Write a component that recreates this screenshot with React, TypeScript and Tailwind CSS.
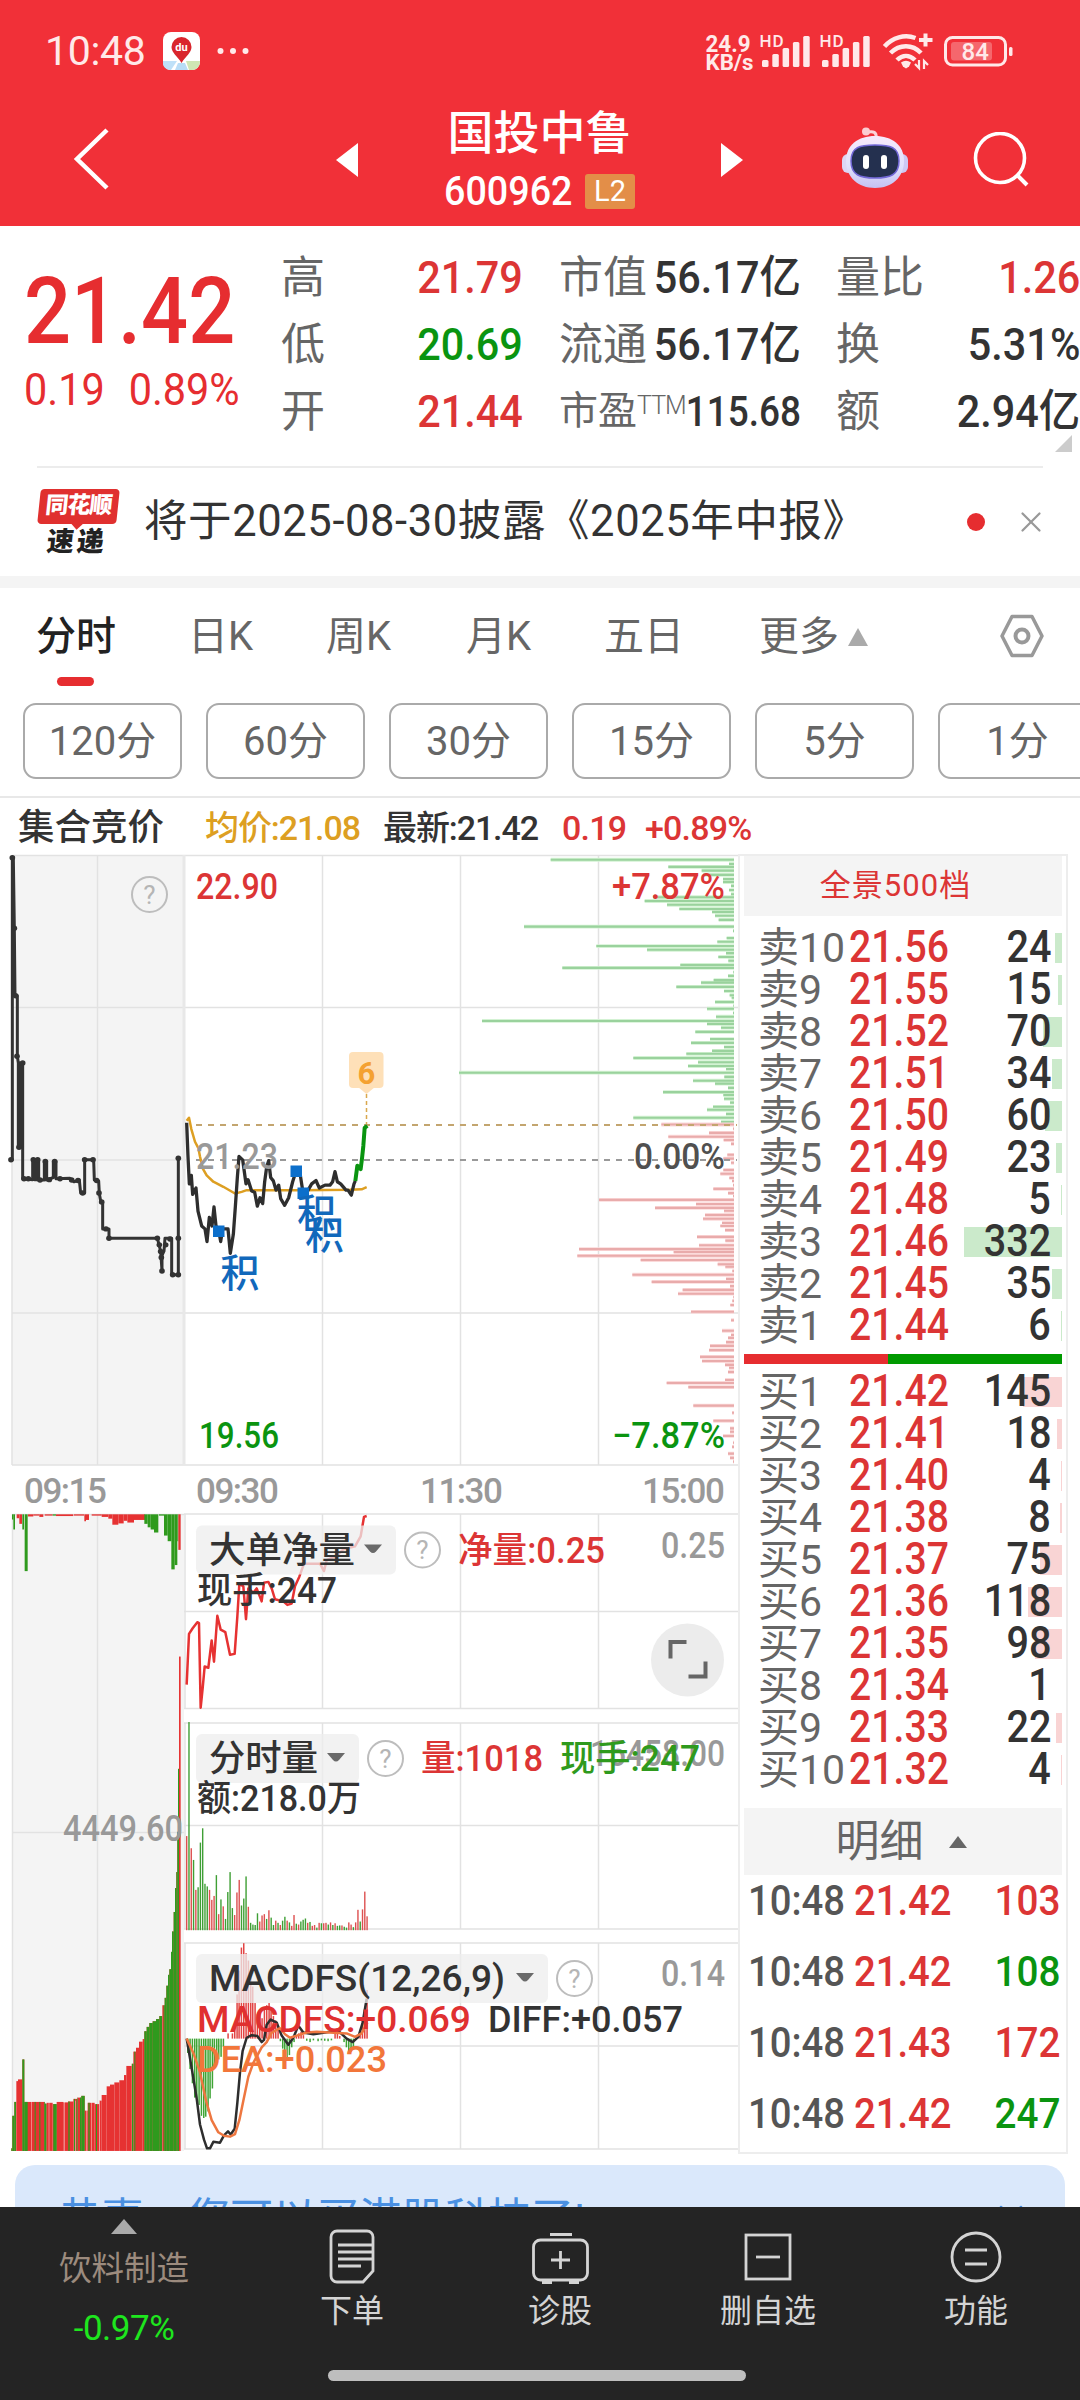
import { X } from 'lucide-react'
import clsx from 'clsx'

const RED = '#e63232'
const GREEN = '#0a9410'
const GRID = '#e2e2e2'

const periods = ['120分', '60分', '30分', '15分', '5分', '1分']

const sells = [
  ['10', '21.56', 24, 7],
  ['9', '21.55', 15, 4],
  ['8', '21.52', 70, 19],
  ['7', '21.51', 34, 10],
  ['6', '21.50', 60, 17],
  ['5', '21.49', 23, 6],
  ['4', '21.48', 5, 1],
  ['3', '21.46', 332, 98],
  ['2', '21.45', 35, 10],
  ['1', '21.44', 6, 1],
] as const

const buys = [
  ['1', '21.42', 145, 39],
  ['2', '21.41', 18, 5],
  ['3', '21.40', 4, 1],
  ['4', '21.38', 8, 2],
  ['5', '21.37', 75, 22],
  ['6', '21.36', 118, 34],
  ['7', '21.35', 98, 27],
  ['8', '21.34', 1, 0],
  ['9', '21.33', 22, 6],
  ['10', '21.32', 4, 1],
] as const

const trades = [
  ['21.42', 103, true],
  ['21.42', 108, false],
  ['21.43', 172, true],
  ['21.42', 247, false],
] as const

const AUCTION_LINE =
  '33,748 37,748 37,30 40,30 43,198 45,358 52,358 52,502 55,518 55,718 59,718 59,518 62,518 62,718 66,718 66,518 68,518 68,793 98,795 98,748 104,748 104,795 110,795 110,748 116,748 116,796 133,796 133,752 140,752 140,796 160,790 160,752 168,752 168,793 210,792 222,800 238,796 242,827 254,827 254,748 281,748 283,796 296,798 298,828 302,846 308,848 308,912 327,912 327,934 472,934 482,965 486,1012 486,975 492,965 495,934 515,934 515,1021 535,1021 535,744'
const AUCTION_DOTS = [
  [37, 30], [43, 198], [47, 358], [51, 502], [68, 518], [57, 718], [33, 748], [100, 748], [113, 748], [136, 752], [164, 752],
  [72, 793], [85, 793], [120, 796], [148, 795], [180, 793], [215, 796], [234, 797], [248, 827], [254, 748], [279, 748],
  [290, 797], [297, 827], [305, 848], [318, 912], [327, 934], [472, 934], [478, 950], [482, 966], [484, 980], [486, 1012],
  [497, 950], [510, 936], [518, 1021], [535, 1021], [535, 934], [535, 744],
]
const PRICE_LINE =
  '560,660 564,740 568,805 574,785 578,830 588,815 594,870 605,905 615,912 621,942 628,885 636,905 642,860 648,905 656,915 662,942 668,912 684,912 691,970 700,925 706,860 712,790 717,740 728,748 738,805 744,795 755,822 764,825 772,858 780,838 788,852 794,800 800,765 806,750 812,790 820,798 828,820 836,808 842,840 854,856 866,838 878,800 888,775 900,780 908,820 920,826 935,805 948,797 958,815 975,808 990,808 998,800 1005,776 1012,800 1022,805 1038,820 1044,820 1054,832 1062,805 1066,798'
const AVG_LINE =
  '560,655 567,648 574,675 585,705 595,720 600,740 608,768 620,785 640,800 670,812 705,828 725,824 740,820 900,820 1050,819 1085,818 1100,813'

// [y, left edge] of every resting order level
const ASK_DEPTH = [
  [35, 542], [45, 1077], [52, 895], [61, 995], [71, 1000], [81, 1059], [88, 1059], [97, 1083], [107, 1077], [117, 1083],
  [124, 850], [133, 824], [142, 891], [152, 928], [159, 1026], [168, 1035], [178, 1046], [194, 462], [204, 1089], [221, 1070],
  [230, 1042], [240, 679], [249, 831], [257, 1068], [266, 1045], [275, 1075], [285, 931], [292, 577], [302, 1090], [311, 1074],
  [321, 1031], [327, 993], [337, 919], [347, 1062], [357, 1079], [363, 1085], [373, 1035], [382, 1090], [389, 1011], [399, 1089],
  [408, 1038], [418, 336], [425, 1011], [434, 1053], [444, 976], [461, 1020], [470, 963], [480, 1062], [489, 1026], [496, 949],
  [506, 790], [516, 984], [525, 954], [532, 1068], [541, 267], [551, 1063], [560, 969], [567, 1035], [577, 1074], [587, 879],
  [594, 1060], [603, 1062], [612, 1080], [622, 1029], [629, 1011], [639, 1068], [648, 790], [658, 1053],
]
const BID_DEPTH = [
  [664, 874], [674, 1089], [684, 1017], [693, 895], [701, 1061], [710, 1083], [736, 1072], [745, 1060], [755, 1083], [772, 1060],
  [781, 1051], [791, 1078], [798, 1086], [808, 1089], [817, 1030], [827, 1074], [834, 1089], [843, 687], [853, 978], [862, 855],
  [869, 1062], [879, 1005], [888, 999], [898, 1056], [905, 1051], [915, 1065], [931, 981], [940, 1066], [951, 987], [960, 627],
  [967, 911], [976, 622], [986, 812], [996, 1043], [1002, 1066], [1012, 1087], [1021, 787], [1031, 1068], [1038, 845], [1048, 1080],
  [1057, 938], [1066, 924], [1074, 1090], [1083, 1087], [1093, 1081], [1109, 963], [1129, 1083], [1154, 1056], [1164, 1083],
  [1171, 1074], [1181, 1068], [1190, 1020], [1200, 1017], [1216, 990], [1226, 996], [1235, 1065], [1242, 1077], [1252, 1074],
  [1271, 1065], [1278, 890], [1288, 955], [1332, 970], [1349, 1086], [1368, 1030], [1386, 1080], [1394, 1080], [1404, 1059],
  [1420, 1089], [1430, 1086], [1446, 1074], [1456, 1080], [1465, 1089],
]

const NET_LINE =
  '560,427 567,310 578,297 592,283 597,285 602,480 608,435 614,385 625,388 635,325 642,374 652,268 662,300 676,306 690,358 704,356 712,270 718,195 730,200 738,276 745,205 760,215 770,205 785,235 792,192 805,190 815,205 825,230 850,235 862,243 875,240 885,200 898,178 912,148 960,148 972,165 980,140 1010,130 1030,115 1065,108 1082,85 1092,40 1100,38'

// one top value per minute; the matching letter is the bar colour
const VOLUME = [
  775, 512, 803, 830, 899, 893, 790, 757, 885, 891, 899, 922, 913, 865, 955, 921, 937, 966, 904, 858, 941, 957, 905, 876, 935, 919,
  868, 938, 975, 979, 980, 953, 972, 958, 955, 966, 946, 963, 980, 970, 975, 980, 970, 961, 970, 974, 982, 957, 977, 979, 972, 968,
  965, 975, 973, 982, 980, 986, 975, 976, 976, 975, 979, 974, 980, 976, 982, 981, 981, 984, 986, 974, 979, 985, 974, 945, 972, 944,
  903, 960,
]
const VOLUME_SIDE = 'rgrgrgggggrrrgrgrggggrrrgggrggggrrrgrggrgrggrgrrgrgggrgrrgrgrrgrgrggrggrrgrrgrrr'

const MACD_BARS = [
  [563, 1275], [570, 1312], [577, 1345], [584, 1378], [590, 1380], [597, 1395], [604, 1420], [611, 1425], [617, 1422], [624, 1410],
  [630, 1380], [637, 1357], [643, 1310], [650, 1290], [656, 1290], [663, 1284], [670, 1260], [684, 1230], [697, 1230], [704, 1212],
  [711, 1140], [717, 1085], [724, 1032], [731, 1022], [738, 1045], [745, 1062], [752, 1090], [758, 1122], [765, 1160], [772, 1185],
  [779, 1185], [786, 1195], [793, 1175], [800, 1165], [807, 1160], [813, 1170], [820, 1190], [827, 1200], [834, 1215], [841, 1248],
  [848, 1265], [854, 1282], [861, 1285], [868, 1280], [875, 1262], [882, 1250], [889, 1234], [896, 1230], [903, 1226], [910, 1234],
  [920, 1247], [930, 1250], [940, 1246], [954, 1248], [964, 1246], [974, 1247], [984, 1248], [994, 1246], [1005, 1225], [1012, 1230],
  [1019, 1236], [1032, 1250], [1039, 1262], [1046, 1270], [1053, 1272], [1060, 1265], [1073, 1235], [1080, 1222], [1087, 1200],
  [1094, 1170], [1101, 1130],
]
const DIFF_LINE =
  '560,1242 575,1310 590,1380 600,1440 612,1475 621,1495 630,1495 640,1480 660,1482 672,1465 684,1456 692,1463 704,1450 712,1390 720,1320 728,1270 740,1240 755,1234 772,1236 785,1250 792,1245 800,1210 812,1198 830,1205 845,1235 865,1256 880,1240 895,1212 910,1228 940,1232 1000,1225 1012,1222 1040,1242 1058,1250 1075,1238 1088,1205 1100,1150'
const DEA_LINE =
  '560,1242 580,1275 600,1320 618,1385 635,1430 655,1458 672,1466 690,1468 705,1462 718,1430 730,1385 745,1330 760,1298 785,1262 800,1250 815,1228 840,1218 855,1232 870,1240 890,1235 920,1228 950,1226 1040,1230 1065,1238 1085,1230 1102,1205'

// [from, top] steps of the call auction volume
const AUCTION_STEPS = [
  [34, 1495], [37, 1420], [43, 1388], [49, 1340], [54, 1336], [67, 1290], [73, 1388], [134, 1392], [140, 1390], [158, 1393],
  [170, 1388], [190, 1389], [204, 1387], [220, 1381], [232, 1378], [244, 1374], [254, 1408], [263, 1390], [284, 1393], [298, 1385],
  [305, 1372], [320, 1352], [330, 1348], [343, 1343], [358, 1338], [372, 1326], [379, 1305], [395, 1300], [400, 1272], [408, 1263],
  [417, 1249], [428, 1243], [433, 1225], [440, 1215], [448, 1206], [458, 1202], [468, 1197], [478, 1190], [487, 1165], [494, 1148],
  [499, 1120], [504, 1095], [508, 1082], [513, 1042], [516, 995], [521, 950], [525, 895], [529, 858], [532, 765], [534, 620],
  [537, 361],
]
const AUCTION_GREEN = [
  [34, 48], [67, 83], [104, 107], [118, 121], [132, 139], [160, 170], [205, 209], [222, 225], [230, 233], [240, 254],
  [265, 269], [288, 291], [396, 400], [403, 406], [433, 486], [491, 537],
]
const AUCTION_GAPS = [93, 146, 192, 226, 258, 274, 297]
const AUCTION_TOP = [
  [36, 40, 45, 'g'], [40, 45, 68, 'g'], [50, 58, 42, 'r'], [58, 66, 55, 'r'], [67, 72, 68, 'g'], [74, 83, 164, 'g'],
  [84, 100, 38, 'r'], [100, 118, 36, 'r'], [118, 130, 39, 'r'], [134, 158, 36, 'r'], [158, 168, 36, 'g'], [168, 220, 37, 'r'],
  [222, 252, 36, 'r'], [253, 258, 49, 'r'], [258, 267, 46, 'r'], [275, 305, 36, 'r'], [305, 325, 39, 'r'], [325, 337, 43, 'r'],
  [337, 355, 57, 'r'], [355, 371, 54, 'r'], [371, 382, 48, 'r'], [382, 402, 52, 'r'], [402, 435, 46, 'r'], [433, 443, 55, 'g'],
  [443, 452, 63, 'g'], [452, 462, 68, 'g'], [462, 475, 75, 'g'], [477, 492, 36, 'g'], [492, 503, 82, 'g'], [503, 514, 95, 'g'],
  [514, 524, 160, 'g'], [524, 532, 150, 'g'], [532, 535, 95, 'g'], [535, 542, 115, 'r'],
] as const

function Label({ x, y, w, fill, children }: { x: number; y: number; w: number; fill: string; children: string }) {
  return (
    <text x={x} y={y} textLength={w} lengthAdjust="spacingAndGlyphs" fill={fill} fontSize={36} fontWeight={500}>
      {children}
    </text>
  )
}

function Help({ cx, cy }: { cx: number; cy: number }) {
  return (
    <g>
      <circle cx={cx} cy={cy} r={17.5} fill="none" stroke="#bdbdbd" strokeWidth={2} />
      <text x={cx} y={cy + 9} textAnchor="middle" fontSize={26} fill="#b5b5b5">
        ?
      </text>
    </g>
  )
}

function StatusBar() {
  return (
    <div className="flex h-[102px] items-center pl-[45px] pr-[67px] text-[#ffe9e9]">
      <span className="w-[101px] text-[41px] leading-none tracking-[-0.300px]">10:48</span>
      <svg className="ml-[17px]" width="37" height="38" viewBox="0 0 37 38">
        <rect width="37" height="38" rx="8" fill="#fff" />
        <path d="M0 29h14l-6 9H7a7 7 0 0 1-7-8z" fill="#bfe0f8" />
        <path d="M23 29h14c0 5-3 9-8 9h-3z" fill="#cfe6b4" />
        <path d="M15 31h7l3 7H12z" fill="#b8dcf6" />
        <path d="M18.500 5a10 10 0 0 0-10 10c0 6 6 9 10 16 4-7 10-10 10-16a10 10 0 0 0-10-10z" fill="#d9252c" />
        <text x="18.500" y="19" fontSize="11" fontWeight="700" fill="#fff" textAnchor="middle">du</text>
      </svg>
      <svg className="ml-[17px]" width="32" height="8" viewBox="0 0 32 8">
        {[3.5, 16, 28.5].map((x) => (
          <circle key={x} cx={x} cy="4" r="3" fill="#ffe9e9" />
        ))}
      </svg>
      <svg className="ml-auto" width="308" height="44" viewBox="706 29 308 44">
        <g fill="#ffe9e9" fontWeight="700">
          <text x="706.500" y="52" fontSize="23.500" textLength="45" lengthAdjust="spacingAndGlyphs">24.9</text>
          <text x="706.500" y="70" fontSize="22" textLength="48" lengthAdjust="spacingAndGlyphs">KB/s</text>
        </g>
        {[0, 60].map((dx) => (
          <g key={dx} fill="#ffe9e9">
            <text x={760.5 + dx} y="47" fontSize="17" textLength="24" fontWeight="500">HD</text>
            {[7, 13, 19, 25, 31].map((h, i) => (
              <rect key={h} x={763 + dx + i * 10.3} y={67 - h} width="6.500" height={h} rx="1.500" />
            ))}
          </g>
        ))}
        <g fill="none" stroke="#ffe9e9" strokeWidth="4.500">
          <path d="M885.500 46.500c8-9 20-12.500 31-8.500" />
          <path d="M891.500 53c9-9 22-9 30.500 0" />
          <path d="M898 60c5.500-5.500 12.500-5.500 18 0" />
          <path d="M926.500 33.500v13M920 40h13.500" strokeWidth="4" />
          <path d="M920 60v8l-4-4M925 69v-8l4 4" strokeWidth="2.200" />
        </g>
        <path d="M902 62.500q5-3.500 10 0l-2 4-3 2-3-2z" fill="#ffe9e9" />
        <rect x="946.500" y="37.500" width="60" height="27.500" rx="7" fill="none" stroke="#ffe9e9" strokeWidth="3" />
        <rect x="952" y="42" width="41" height="18.500" rx="3" fill="#ffe9e9" opacity=".3" />
        <rect x="1010" y="47" width="3.500" height="9" rx="1.500" fill="#ffe9e9" />
        <text x="962.500" y="60" fontSize="24" fontWeight="500" fill="#ffe9e9">84</text>
      </svg>
    </div>
  )
}

function TitleBar() {
  return (
    <div className="flex h-[124px] items-center pl-[72px] pr-[49px] text-white">
      <svg width="40" height="64" viewBox="0 0 40 64" className="mt-[-10px]">
        <path d="M35 3 5 32l30 29" fill="none" stroke="#fff" strokeWidth="4.500" />
      </svg>
      <svg width="22" height="34" viewBox="0 0 22 34" className="ml-[224px] mt-[-9px]">
        <path d="M22 0v34L0 17z" fill="#fff" />
      </svg>
      <div className="mt-[-4px] flex w-[363px] flex-col items-center">
        <h1 className="text-[46px] font-medium leading-[58px]">国投中鲁</h1>
        <div className="flex items-center gap-3 leading-[58px]">
          <span className="-mr-[9px] origin-left scale-x-[.93] text-[40.500px] font-medium">600962</span>
          <span className="flex h-[35px] w-[50px] items-center justify-center rounded-[3px] bg-[#e38e48] text-[29px] leading-none">L2</span>
        </div>
      </div>
      <svg width="22" height="34" viewBox="0 0 22 34" className="mt-[-9px]">
        <path d="M0 0v34l22-17z" fill="#fff" />
      </svg>
      <svg width="68" height="64" viewBox="0 0 68 64" className="ml-[99px] mt-[-10px]">
        <defs>
          <linearGradient id="shell" x1="0" y1="0" x2="0" y2="1">
            <stop offset="0" stopColor="#f7e9fb" />
            <stop offset=".6" stopColor="#dfe0fb" />
            <stop offset="1" stopColor="#c5c0f2" />
          </linearGradient>
        </defs>
        <path d="M34 11c1-6-3-7-8-6" fill="none" stroke="#fbd3d8" strokeWidth="3" />
        <circle cx="24" cy="4.500" r="4" fill="#fbcdd2" />
        <rect x="0" y="27" width="12" height="19" rx="6" fill="#dcd6f5" />
        <rect x="54" y="27" width="12" height="19" rx="6" fill="#cdc8f3" />
        <path d="M33 9c17 0 29 9 29 25S50 61 33 61 4 50 4 34 16 9 33 9z" fill="url(#shell)" />
        <path d="M33 18c15 0 24 2 24 16S48 51 33 51 9 48 9 34s9-16 24-16z" fill="#24304f" stroke="#7268d6" strokeWidth="1.500" />
        <rect x="21" y="28" width="6" height="14" rx="3" fill="#fff" />
        <rect x="39" y="28" width="6" height="14" rx="3" fill="#fff" />
      </svg>
      <svg width="58" height="58" viewBox="0 0 58 58" className="ml-auto mt-[-6px]">
        <circle cx="27" cy="26" r="24.500" fill="none" stroke="#fff" strokeWidth="3.600" />
        <path d="m44 43 10 10" stroke="#fff" strokeWidth="4" />
      </svg>
    </div>
  )
}

function Stat({ label, value, color = 'text-[#333]' }: { label: React.ReactNode; value: string; color?: string }) {
  return (
    <div className="flex h-[67px] items-center justify-between whitespace-nowrap">
      <span className="text-[44px] text-[#666]">{label}</span>
      <span className={clsx('-ml-5 origin-right scale-x-[.92] text-[45px] font-medium', color)}>{value}</span>
    </div>
  )
}

function Quote() {
  return (
    <section className="relative flex h-[240px] pt-[18px] leading-none">
      <div className="w-[281px] shrink-0 pl-[24px] text-[#e62d30]">
        <div className="origin-left scale-x-[.9] pt-[22px] text-[92px] font-medium leading-[92px]">21.42</div>
        <div className="mt-[7px] flex origin-left scale-x-[.92] gap-[26px] text-[45px] leading-[50px]">
          <span>0.19</span>
          <span>0.89%</span>
        </div>
      </div>
      <div className="w-[242px] shrink-0">
        <Stat label="高" value="21.79" color="text-[#dc3535]" />
        <Stat label="低" value="20.69" color="text-[#0a9410]" />
        <Stat label="开" value="21.44" color="text-[#dc3535]" />
      </div>
      <div className="ml-9 w-[242px] shrink-0">
        <Stat label="市值" value="56.17亿" />
        <Stat label="流通" value="56.17亿" />
        <div className="flex h-[67px] items-center justify-between whitespace-nowrap">
          <span className="text-[39px] text-[#666]">
            市盈<sup className="top-[-10px] text-[25px] font-light tracking-[-1px]">TTM</sup>
          </span>
          <span className="-ml-5 origin-right scale-x-[.88] text-[42px] font-medium text-[#333]">115.68</span>
        </div>
      </div>
      <div className="ml-[35px] w-[244px] shrink-0">
        <Stat label="量比" value="1.26" color="text-[#dc3535]" />
        <Stat label="换" value="5.31%" />
        <Stat label="额" value="2.94亿" />
      </div>
      <svg className="absolute bottom-[14px] right-2" width="17" height="17" viewBox="0 0 17 17">
        <path d="M17 0v17H0z" fill="#ccc" />
      </svg>
    </section>
  )
}

function Notice() {
  return (
    <section className="mx-[37px] flex h-[110px] items-center border-t-2 border-[#ececec] whitespace-nowrap">
      <div className="w-[107px] shrink-0 pl-0.5">
        <div className="relative h-[35px] w-[79px] -skew-x-6 rounded-[4px] bg-[#e0302f] text-center text-[23px] font-black leading-[34px] tracking-[-1px] text-white">
          同花顺
          <span className="absolute left-9 top-[31px] h-2 w-2 rotate-45 bg-[#e0302f]" />
        </div>
        <div className="ml-[8px] mt-1 -skew-x-6 text-[27px] font-black leading-[28px] tracking-[3px] text-[#222]">速递</div>
      </div>
      <span className="text-[43.500px] leading-none tracking-[0.600px] text-[#333]">将于2025-08-30披露《2025年中报》</span>
      <span className="ml-auto mr-[29px] h-[18px] w-[18px] shrink-0 rounded-full bg-[#e62d30]" />
      <X className="-mr-[5px] h-[34px] w-[34px] shrink-0 text-[#999]" strokeWidth={1.6} />
    </section>
  )
}

function Tabs() {
  return (
    <nav className="relative flex h-[115px] items-start whitespace-nowrap pl-[36px] pt-[20px] text-[40px] leading-[58px] text-[#666]">
      <div className="w-[152px] font-medium text-[#222]">
        分时
        <div className="ml-[21px] mt-[11px] h-[9px] w-[37px] rounded-full bg-[#e62d30]" />
      </div>
      <div className="w-[138px]">日K</div>
      <div className="w-[140px]">周K</div>
      <div className="w-[138px]">月K</div>
      <div className="w-[155px]">五日</div>
      <div className="flex items-center gap-[9px]">
        更多
        <svg width="20" height="18" viewBox="0 0 20 18"><path d="M10 0l10 18H0z" fill="#aaa" /></svg>
      </div>
      <svg className="ml-auto mr-9 mt-[6px]" width="44" height="44" viewBox="0 0 44 44" fill="none" stroke="#999">
        <path d="M12 2.500h20L42 22 32 41.500H12L2 22z" strokeWidth="3.500" strokeLinejoin="round" />
        <circle cx="22" cy="22" r="6.500" strokeWidth="4" />
      </svg>
    </nav>
  )
}

function PriceChart() {
  return (
    <svg width="738" height="616" viewBox="0 853 738 616" className="block">
      <rect x="12" y="855" width="173" height="610" fill="#f4f4f4" />
      <g stroke={GRID} strokeWidth="1.500" fill="none">
        <path d="M12 855.500H738M12 1007.500H738M12 1160H186M12 1313H738M12 1465H738" />
        <path d="M12 855v610M97.500 855v610M322.500 855v610M460.500 855v610M598.500 855v610" />
        <path d="M184 855v610" strokeWidth="3" stroke="#e8e8e8" />
      </g>
      <g transform="translate(370 845) scale(.33333 .42092)" fill="none">
        <path d={ASK_DEPTH.map(([y, x]) => `M${x} ${y}H1092`).join('')} stroke="#d3f2d3" strokeWidth="9" />
        <path d={ASK_DEPTH.map(([y, x]) => `M${x} ${y}H1092`).join('')} stroke="#9ad29d" strokeWidth="5" />
        <path d={BID_DEPTH.map(([y, x]) => `M${x} ${y}H1092`).join('')} stroke="#fbdada" strokeWidth="9" />
        <path d={BID_DEPTH.map(([y, x]) => `M${x} ${y}H1092`).join('')} stroke="#e9abab" strokeWidth="5" />
      </g>
      <path d="M196 1125H737" stroke="#c3a56f" strokeWidth="2" strokeDasharray="6 6" />
      <path d="M196 1160H737" stroke="#999" strokeWidth="2" strokeDasharray="6 6" />
      <Label x={196} y={899} w={82} fill="#dc3535">22.90</Label>
      <Label x={612} y={899} w={113} fill="#dc3535">+7.87%</Label>
      <Label x={634} y={1169} w={91} fill="#505050">0.00%</Label>
      <Label x={199} y={1448} w={80} fill={GREEN}>19.56</Label>
      <Label x={612} y={1448} w={113} fill={GREEN}>−7.87%</Label>
      <Help cx={149.5} cy={894.5} />
      <g transform="translate(0 845) scale(.33333 .42092)" fill="none" strokeLinejoin="round">
        <polyline points={AUCTION_LINE} stroke="#333" strokeWidth="3" vectorEffect="non-scaling-stroke" />
        {AUCTION_DOTS.map(([x, y]) => (
          <ellipse key={`${x}-${y}`} cx={x} cy={y} rx="8.500" ry="6.500" fill="#333" />
        ))}
        <polyline points={AVG_LINE} stroke="#dd9f22" strokeWidth="2.500" vectorEffect="non-scaling-stroke" />
        <polyline points={PRICE_LINE} stroke="#2e2e2e" strokeWidth="3.300" vectorEffect="non-scaling-stroke" />
        <polyline points="1066,798 1072,762 1082,770 1086,745 1090,715 1094,672 1102,667" stroke={GREEN} strokeWidth="4" vectorEffect="non-scaling-stroke" />
      </g>
      <Label x={196} y={1169} w={82} fill="#999">21.23</Label>
      <g fill="#0c6fcb">
        <rect x="213" y="1225.500" width="11.500" height="11.500" />
        <rect x="290.500" y="1165.500" width="11.500" height="11.500" />
        <rect x="297.500" y="1187.500" width="11.500" height="11.500" />
      </g>
      <g fill="#1168bb" fontSize="39" fontWeight="500">
        <text x="220.500" y="1287">积</text>
        <text x="297" y="1227">积</text>
        <text x="305" y="1249">积</text>
      </g>
      <rect x="349" y="1052" width="34.500" height="36" rx="4" fill="#fee0b8" />
      <path d="M358 1087h17l-8.500 7z" fill="#fee0b8" />
      <text x="366.500" y="1084" textAnchor="middle" fontSize="31" fontWeight="700" fill="#f4a131">6</text>
      <path d="M366.500 1094v30" stroke="#d9a84e" strokeWidth="1.500" strokeDasharray="4 3" />
    </svg>
  )
}

function AuctionVolume() {
  return (
    <svg width="184" height="640" viewBox="0 1513 184 640" className="shrink-0">
      <rect x="12" y="1514" width="172" height="637" fill="#f4f4f4" />
      <path d="M12 1514.500h172M12 1832.500h172M12.500 1514v637M97.500 1514v637" stroke={GRID} strokeWidth="1.500" />
      <g transform="translate(0 1500) scale(.33333 .43367)">
        {AUCTION_STEPS.map(([x, y], i) => (
          <rect key={x} x={x} y={y} width={(AUCTION_STEPS[i + 1]?.[0] ?? 542) - x} height={1501 - y} fill={RED} />
        ))}
        {AUCTION_GREEN.map(([a, b]) =>
          AUCTION_STEPS.map(([x, y], i) => {
            const from = Math.max(a, x)
            const to = Math.min(b, AUCTION_STEPS[i + 1]?.[0] ?? 542)
            return from < to ? <rect key={`${a}-${x}`} x={from} y={y} width={to - from} height={1501 - y} fill="#2f9a1d" /> : null
          }),
        )}
        {AUCTION_GAPS.map((x) => (
          <rect key={x} x={x} y="1385" width="2" height="116" fill="#fff" opacity=".6" />
        ))}
        {AUCTION_TOP.map(([a, b, y, side]) => (
          <rect key={a} x={a} y="33" width={b - a} height={y - 33} fill={side === 'r' ? RED : '#2f9a1d'} />
        ))}
      </g>
      <Label x={63} y={1841} w={120} fill="#999">4449.60</Label>
    </svg>
  )
}

type PaneProps = { top: number; mid: number; bottom: number; chart: React.ReactNode; children: React.ReactNode }

function Pane({ top, mid, bottom, chart, children }: PaneProps) {
  return (
    <svg width="554" height={bottom - top + 14} viewBox={`184 ${top - 1} 554 ${bottom - top + 14}`} className="block">
      <path
        d={`M184 ${top}H738M184 ${mid}H738M184 ${bottom}H738M322.500 ${top}V${bottom}M460.500 ${top}V${bottom}M598.500 ${top}V${bottom}M185 ${top}V${bottom}`}
        stroke={GRID}
        strokeWidth="1.500"
      />
      <g transform="translate(0 1500) scale(.33333 .43367)" fill="none" strokeLinejoin="round">
        {chart}
      </g>
      {children}
    </svg>
  )
}

function Chip({ y, w, textW, label }: { y: number; w: number; textW: number; label: string }) {
  return (
    <g>
      <rect x="196" y={y} width={w} height="49" rx="6" fill="#eeeeee" opacity=".75" />
      <text x="209" y={y + 37} fontSize="36" textLength={textW} lengthAdjust="spacingAndGlyphs" fontWeight="500" fill="#333">
        {label}
      </text>
      <path d={`M${196 + w - 32} ${y + 19}h18l-6 7q-3 3-6 0z`} fill="#6a6a6a" />
    </g>
  )
}

function Indicators() {
  return (
    <div className="flex h-[640px]">
      <AuctionVolume />
      <div>
        <Pane
          top={1514.5}
          mid={1612}
          bottom={1709}
          chart={<polyline points={NET_LINE} stroke={RED} strokeWidth="2.500" vectorEffect="non-scaling-stroke" />}
        >
          <Chip y={1526} w={200} textW={146} label="大单净量" />
          <Help cx={422.5} cy={1550.5} />
          <Label x={458} y={1563} w={147} fill="#dc3535">净量:0.25</Label>
          <Label x={661} y={1558} w={64} fill="#999">0.25</Label>
          <Label x={197} y={1603} w={140} fill="#333">现手:247</Label>
          <circle cx="687.500" cy="1660.500" r="36.500" fill="#ececec" />
          <path d="M670.500 1659v-16.500h16M688.500 1677h17v-15" fill="none" stroke="#666" strokeWidth="4" />
        </Pane>
        <Pane
          top={1723}
          mid={1825.5}
          bottom={1929}
          chart={VOLUME.map((y, i) => (
            <rect key={i} x={558 + i * 6.85} y={y} width="4.200" height={992 - y} fill={VOLUME_SIDE[i] === 'r' ? '#dd5050' : '#3f9f35'} />
          ))}
        >
          <Chip y={1734} w={163} textW={109} label="分时量" />
          <Help cx={385.5} cy={1758.5} />
          <Label x={421} y={1771} w={122} fill="#dc3535">量:1018</Label>
          <Label x={590} y={1766} w={135} fill="#999">15458.00</Label>
          <Label x={560} y={1771} w={140} fill="#2f9a1d">现手:247</Label>
          <Label x={197} y={1811} w={164} fill="#333">额:218.0万</Label>
        </Pane>
        <Pane
          top={1943}
          mid={2046}
          bottom={2149}
          chart={
            <>
              {MACD_BARS.map(([x, y]) => (
                <rect key={x} x={x - 2} y={Math.min(y, 1242)} width="4.500" height={Math.abs(y - 1242)} fill={y < 1242 ? '#e24444' : '#3fa435'} />
              ))}
              <polyline points={DIFF_LINE} stroke="#2e2e2e" strokeWidth="2.500" vectorEffect="non-scaling-stroke" />
              <polyline points={DEA_LINE} stroke="#ee7740" strokeWidth="2.500" vectorEffect="non-scaling-stroke" />
            </>
          }
        >
          <Chip y={1954} w={352} textW={296} label="MACDFS(12,26,9)" />
          <Help cx={574.5} cy={1978.5} />
          <Label x={661} y={1986} w={64} fill="#999">0.14</Label>
          <Label x={197} y={2032} w={274} fill="#e03030">MACDFS:+0.069</Label>
          <Label x={488} y={2032} w={195} fill="#333">DIFF:+0.057</Label>
          <Label x={197} y={2072} w={190} fill="#f2763a">DEA:+0.023</Label>
        </Pane>
      </div>
    </div>
  )
}

type Level = readonly [string, string, number, number]

function Levels({ side, rows, bar }: { side: string; rows: readonly Level[]; bar: string }) {
  return (
    <div className="leading-none">
      {rows.map(([level, price, qty, w]) => (
        <div key={level} className="relative flex h-[42px] items-center pl-[14px] pr-[11px]">
          <span className={clsx('absolute right-0 top-[6px] h-[30px]', bar)} style={{ width: w }} />
          <span className="w-[91px] text-[41px] text-[#666]">{side}{level}</span>
          <span className="origin-left scale-x-90 text-[43.500px] font-medium text-[#dc3535]">{price}</span>
          <span className="relative ml-auto origin-right scale-x-[.91] text-[43.500px] font-medium text-[#333]">{qty}</span>
        </div>
      ))}
    </div>
  )
}

function OrderBook() {
  return (
    <aside className="h-[1300px] w-[330px] border-2 border-[#ededed] px-1">
      <div className="h-[60px] bg-[#f4f4f4] pr-[15px] text-center text-[31px] leading-[59px] tracking-[1px] text-[#dc3535]">全景500档</div>
      <div className="mt-[11px]">
        <Levels side="卖" rows={sells} bar="bg-[#cbeacb]" />
      </div>
      <div className="mb-[7px] mt-[7px] flex h-[10px]">
        <div className="w-[144px] bg-[#e62d30]" />
        <div className="grow bg-[#009a00]" />
      </div>
      <Levels side="买" rows={buys} bar="bg-[#f9d4d4]" />
      <div className="mt-[17px] flex h-[67px] items-center justify-center gap-[25px] bg-[#f4f4f4] pr-1 text-[44px] text-[#666]">
        明细
        <svg width="18" height="12" viewBox="0 0 18 12"><path d="M9 0l9 12H0z" fill="#666" /></svg>
      </div>
      <div className="mt-[-9px]">
        {trades.map(([price, qty, up], i) => (
          <div key={i} className="flex h-[71px] items-center pl-[4px] pr-[2px] text-[42.500px] font-medium leading-none">
            <span className="w-[106px] origin-left scale-x-90 text-[#555]">10:48</span>
            <span className="origin-left scale-x-90 text-[#dc3535]">{price}</span>
            <span className={clsx('ml-auto origin-right scale-x-[.91]', up ? 'text-[#dc3535]' : 'text-[#0a9410]')}>{qty}</span>
          </div>
        ))}
      </div>
    </aside>
  )
}

const navItems = [
  {
    label: '下单',
    icon: (
      <>
        <path d="M12 3h30a6 6 0 0 1 6 6v34l-10 11H12a6 6 0 0 1-6-6V9a6 6 0 0 1 6-6z" transform="translate(3 0)" />
        <path d="M16 17h34M16 24h34M16 31h34M16 38h23" />
      </>
    ),
  },
  {
    label: '诊股',
    icon: (
      <>
        <rect x="3.500" y="12" width="54" height="40" rx="7" />
        <path d="M20 6.500h22M30.500 23v18M21 32h19M12 54.500h10M39 54.500h10" />
      </>
    ),
  },
  {
    label: '删自选',
    icon: (
      <>
        <rect x="8" y="7" width="44" height="44" />
        <path d="M18 29h24" />
      </>
    ),
  },
  {
    label: '功能',
    icon: (
      <>
        <circle cx="30" cy="29" r="24" />
        <path d="M19 22h22M19 36h22" />
      </>
    ),
  },
]

function BottomNav() {
  return (
    <footer className="relative h-[193px] bg-[#242424]">
      <div className="flex">
        <div className="flex w-[248px] flex-col items-center pt-3">
          <svg width="26" height="15" viewBox="0 0 26 15"><path d="M13 0l13 15H0z" fill="#aaa" /></svg>
          <span className="mt-[13px] text-[32.500px] leading-[44px] text-[#9c8b7e]">饮料制造</span>
          <span className="mt-[18px] text-[35px] leading-[40px] tracking-[-0.500px] text-[#1ee61e]">-0.97%</span>
        </div>
        {navItems.map(({ label, icon }) => (
          <div key={label} className="flex w-[208px] flex-col items-center pt-[21px]">
            <svg width="60" height="58" viewBox="0 0 60 58" fill="none" stroke="#d4d4d4" strokeWidth="2.800">
              {icon}
            </svg>
            <span className="mt-[3px] text-[32px] leading-[44px] text-[#d4d4d4]">{label}</span>
          </div>
        ))}
      </div>
      <div className="absolute bottom-[19px] left-[328px] h-[11px] w-[418px] rounded-full bg-[#bebebe]" />
    </footer>
  )
}

export default function App() {
  return (
    <div className="h-[2400px] w-[1080px] overflow-hidden bg-white [font-family:Roboto,'Noto_Sans_CJK_SC',sans-serif]">
      <header className="h-[226px] bg-[#f13038]">
        <StatusBar />
        <TitleBar />
      </header>
      <Quote />
      <Notice />
      <div className="h-3 bg-[#f4f4f4]" />
      <Tabs />
      <div className="flex h-[95px] gap-6 border-b-2 border-[#e8e8e8] pl-[23px]">
        {periods.map((p) => (
          <div key={p} className="flex h-[76px] w-[159px] shrink-0 items-center justify-center rounded-[13px] border-2 border-[#aaa] pt-0.5 text-[40px] text-[#666]">
            {p}
          </div>
        ))}
      </div>
      <div className="flex h-[55px] items-center whitespace-nowrap pl-[18px] pt-[5px] text-[34px] font-medium leading-none text-[#333]">
        <span className="w-[187px] text-[36.500px]">集合竞价</span>
        <span className="w-[178px] tracking-[-1.100px] text-[#dd9f22]">均价:21.08</span>
        <span className="w-[179px] tracking-[-1.100px]">最新:21.42</span>
        <span className="w-[83px] tracking-[-0.800px] text-[#dc3535]">0.19</span>
        <span className="tracking-[-0.800px] text-[#dc3535]">+0.89%</span>
      </div>
      <div className="flex h-[1312px]">
        <div className="w-[738px] shrink-0">
          <PriceChart />
          <div className="flex h-[44px] items-center pl-6 pt-px text-[35px] font-medium leading-none tracking-[-1.500px] text-[#999]">
            <span className="w-[172px]">09:15</span>
            <span className="w-[224px]">09:30</span>
            <span className="w-[222px]">11:30</span>
            <span>15:00</span>
          </div>
          <Indicators />
        </div>
        <div className="pt-px">
          <OrderBook />
        </div>
      </div>
      <div className="mx-[15px] flex h-[42px] justify-between overflow-hidden rounded-t-[20px] bg-[#dae8fb] pl-[43px] pr-[34px] text-[#4a90e2]">
        <span className="mt-[29px] whitespace-nowrap text-[43px] leading-[50px]">恭喜，您可以买港股科技了!</span>
        <X className="mt-[32px] h-10 w-10 shrink-0" strokeWidth={1.5} />
      </div>
      <BottomNav />
    </div>
  )
}
